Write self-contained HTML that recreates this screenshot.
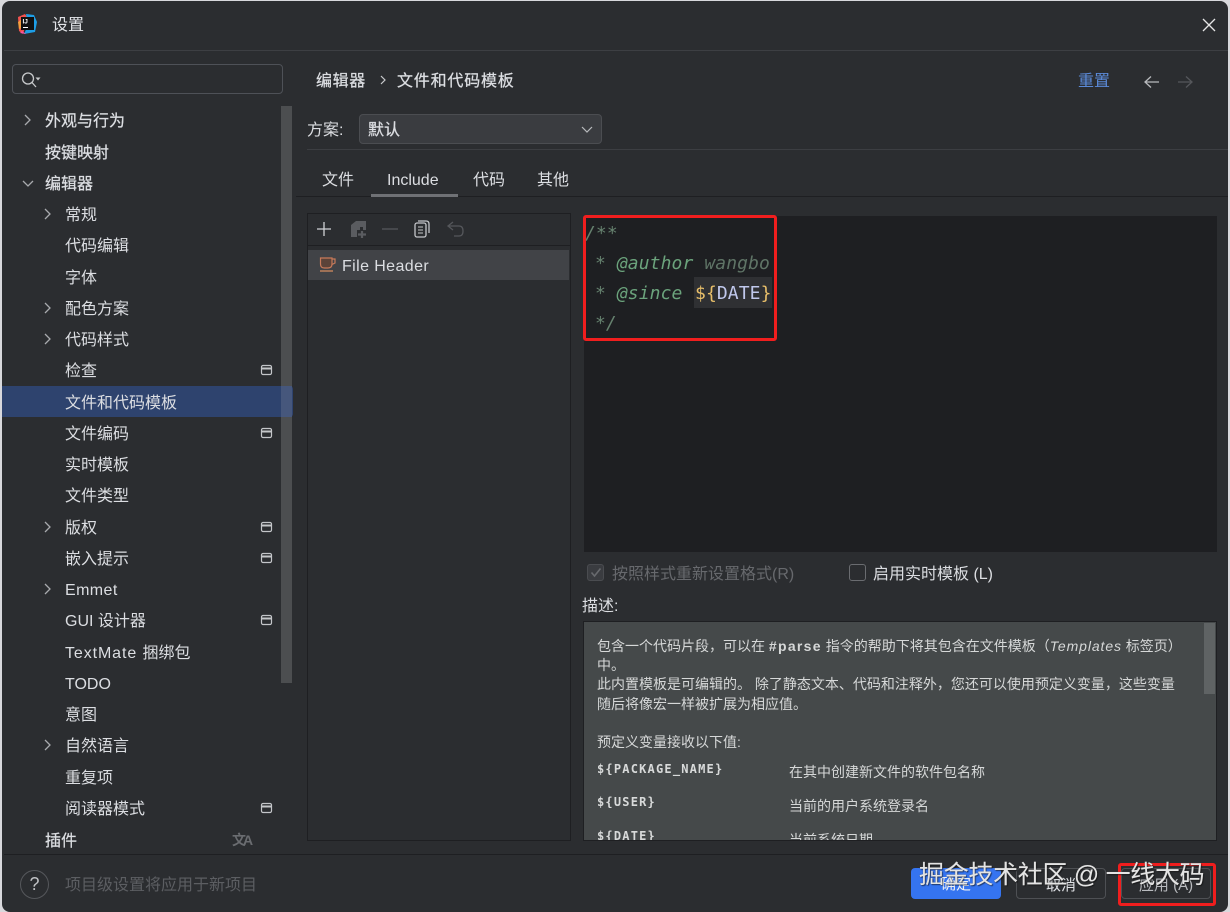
<!DOCTYPE html>
<html lang="zh"><head><meta charset="utf-8"><title>设置</title>
<style>
html,body{margin:0;padding:0;width:1230px;height:912px;overflow:hidden;background:#d8d8dc}
*{box-sizing:border-box}
body{font-family:"Liberation Sans","Noto Sans CJK SC",sans-serif;color:#dfe1e5;font-size:16px}
.a{position:absolute;white-space:nowrap;line-height:22px;margin-top:2px}
#dlg{position:absolute;left:2px;top:1px;width:1226px;height:911px;background:#2b2d30;border-radius:8px;overflow:hidden}
#root{position:absolute;left:0;top:0;width:1230px;height:912px}
.hl{position:absolute;background:#3c3e42;height:1px}
.mi{position:absolute;white-space:nowrap;font-size:16px;line-height:22px;color:#dcdee2;margin-top:2px}
.b{font-weight:400;-webkit-text-stroke:.25px #dcdee2}
.mono{font-family:"DejaVu Sans Mono","Liberation Mono",monospace}
svg{position:absolute;overflow:visible}
.a.d,.a.v{margin-top:0}
.d{font-size:14px;color:#d6d8d8;line-height:20px}
.v{font-family:"DejaVu Sans Mono","Liberation Mono",monospace;font-size:12px;letter-spacing:1.2px;font-weight:700;color:#d8dada;line-height:16px}
.btn{position:absolute;top:868px;width:90px;height:31px;border-radius:4px;text-align:center;line-height:34px;font-size:15px}
</style></head><body>
<div id="root">
<div id="dlg"></div>

<!-- title bar -->
<svg style="left:17px;top:13px" width="21" height="22" viewBox="0 0 21 22">
<path d="M1 4 L8 1 L11 5 L6 21 L2 18Z" fill="#f0524f"/><path d="M1 9 L5 6 L6 15 L2 16Z" fill="#f59d3d"/>
<path d="M9 1 L17 2 L20 9 L18 19 L7 21 L11 12Z" fill="#1d9ee6"/><path d="M5 18 L9 21 L3 20Z" fill="#ff4fa3"/>
<rect x="4" y="4" width="13" height="13" fill="#111"/>
<text x="5.5" y="10.5" font-family="Liberation Sans" font-size="6.5" font-weight="700" fill="#fff">IJ</text>
<rect x="6" y="14" width="5" height="1" fill="#fff"/></svg>
<div class="a" style="left:52px;top:13px;color:#e2e4e8">设置</div>
<svg style="left:1202px;top:18px" width="14" height="14" viewBox="0 0 14 14"><path d="M1 1 L13 13 M13 1 L1 13" stroke="#e6e6e6" stroke-width="1.3" fill="none"/></svg>
<div class="hl" style="left:4px;top:50px;width:1224px;background:#3d3f43"></div>

<!-- search -->
<div style="position:absolute;left:12px;top:64px;width:271px;height:30px;border:1px solid #4e5157;border-radius:4px"></div>
<svg style="left:20px;top:71px" width="22" height="18" viewBox="0 0 22 18"><circle cx="8" cy="7.5" r="5.5" stroke="#c8cacc" stroke-width="1.3" fill="none"/><path d="M12 11.5 L16 16" stroke="#c8cacc" stroke-width="1.3"/><path d="M15.5 6.5 H20.5 L18 9.5Z" fill="#c8cacc"/></svg>

<!-- sidebar selection and scrollbar -->
<div style="position:absolute;left:2px;top:386px;width:291px;height:31px;background:#2e436e;border-radius:0 3px 3px 0"></div>
<div style="position:absolute;left:281px;top:106px;width:11px;height:577px;background:#4c4e50"></div>
<div style="position:absolute;left:281px;top:386px;width:11px;height:31px;background:#46577c"></div>

<!-- sidebar -->
<svg style="left:0;top:0" width="300" height="860" fill="none" stroke="#a8aaae" stroke-width="1.3">
<path d="M25 115 L30 120 L25 125"/>
<path d="M23 181 L28 186 L33 181"/>
<path d="M45 209 L50 214 L45 219"/>
<path d="M45 303 L50 308 L45 313"/>
<path d="M45 334 L50 339 L45 344"/>
<path d="M45 522 L50 527 L45 532"/>
<path d="M45 584 L50 589 L45 594"/>
<path d="M45 740 L50 745 L45 750"/>
<g stroke="#c4c6c9" stroke-width="1.2">
<rect x="261.5" y="365.5" width="10" height="9" rx="1.5"/><path d="M262 368.5H271" stroke-width="2"/>
<rect x="261.5" y="428.5" width="10" height="9" rx="1.5"/><path d="M262 431.5H271" stroke-width="2"/>
<rect x="261.5" y="522.5" width="10" height="9" rx="1.5"/><path d="M262 525.5H271" stroke-width="2"/>
<rect x="261.5" y="553.5" width="10" height="9" rx="1.5"/><path d="M262 556.5H271" stroke-width="2"/>
<rect x="261.5" y="615.5" width="10" height="9" rx="1.5"/><path d="M262 618.5H271" stroke-width="2"/>
<rect x="261.5" y="803.5" width="10" height="9" rx="1.5"/><path d="M262 806.5H271" stroke-width="2"/>
</g></svg>
<div class="mi b" style="left:45px;top:109px">外观与行为</div>
<div class="mi b" style="left:45px;top:141px">按键映射</div>
<div class="mi b" style="left:45px;top:172px">编辑器</div>
<div class="mi" style="left:65px;top:203px">常规</div>
<div class="mi" style="left:65px;top:234px">代码编辑</div>
<div class="mi" style="left:65px;top:266px">字体</div>
<div class="mi" style="left:65px;top:297px">配色方案</div>
<div class="mi" style="left:65px;top:328px">代码样式</div>
<div class="mi" style="left:65px;top:359px">检查</div>
<div class="mi" style="left:65px;top:391px">文件和代码模板</div>
<div class="mi" style="left:65px;top:422px">文件编码</div>
<div class="mi" style="left:65px;top:453px">实时模板</div>
<div class="mi" style="left:65px;top:484px">文件类型</div>
<div class="mi" style="left:65px;top:516px">版权</div>
<div class="mi" style="left:65px;top:547px">嵌入提示</div>
<div class="mi" style="left:65px;top:578px;letter-spacing:.4px">Emmet</div>
<div class="mi" style="left:65px;top:609px">GUI 设计器</div>
<div class="mi" style="left:65px;top:641px"><span style="letter-spacing:.9px">TextMate </span>捆绑包</div>
<div class="mi" style="left:65px;top:672px">TODO</div>
<div class="mi" style="left:65px;top:703px">意图</div>
<div class="mi" style="left:65px;top:734px">自然语言</div>
<div class="mi" style="left:65px;top:766px">重复项</div>
<div class="mi" style="left:65px;top:797px">阅读器模式</div>
<div class="mi b" style="left:45px;top:829px">插件</div>
<div class="a" style="left:232px;top:827px;font-size:14px;color:#6a6c70;font-weight:700;letter-spacing:-3px">文A</div>

<!-- right header -->
<div class="mi b" style="left:316px;top:69px;letter-spacing:.6px">编辑器</div>
<svg style="left:380px;top:75px" width="6" height="10" viewBox="0 0 6 10"><path d="M1 1 L5 5 L1 9" stroke="#c8cacc" stroke-width="1.2" fill="none"/></svg>
<div class="mi b" style="left:397px;top:69px;letter-spacing:.8px">文件和代码模板</div>
<div class="a" style="left:1078px;top:69px;color:#5b8ad8">重置</div>
<svg style="left:1144px;top:75px" width="50" height="14" viewBox="0 0 50 14" fill="none"><path d="M1 7 H15 M7 1.5 L1 7 L7 12.5" stroke="#b8babd" stroke-width="1.3"/><path d="M34 7 H48 M42 1.5 L48 7 L42 12.5" stroke="#55575b" stroke-width="1.3"/></svg>

<!-- scheme -->
<div class="mi" style="left:307px;top:118px">方案:</div>
<div style="position:absolute;left:359px;top:114px;width:243px;height:30px;background:#3a3c40;border:1px solid #4b4d51;border-radius:4px"></div>
<div class="mi b" style="left:368px;top:118px">默认</div>
<svg style="left:581px;top:126px" width="12" height="8" viewBox="0 0 12 8"><path d="M1 1 L6 6 L11 1" stroke="#b8babd" stroke-width="1.2" fill="none"/></svg>
<div class="hl" style="left:307px;top:149px;width:921px"></div>

<!-- tabs -->
<div class="mi" style="left:322px;top:168px">文件</div>
<div class="mi" style="left:387px;top:168px">Include</div>
<div class="mi" style="left:473px;top:168px">代码</div>
<div class="mi" style="left:537px;top:168px">其他</div>
<div class="hl" style="left:296px;top:196px;width:932px;background:#1e1f22"></div>
<div style="position:absolute;left:371px;top:194px;width:87px;height:3px;background:#6f7175"></div>

<!-- list panel -->
<div style="position:absolute;left:307px;top:213px;width:264px;height:628px;border:1px solid #1e1f22"></div>
<div class="hl" style="left:308px;top:245px;width:262px;background:#1e1f22"></div>
<svg style="left:308px;top:214px" width="170" height="30" fill="none">
<path d="M9 15 H23 M16 8 V22" stroke="#d0d2d5" stroke-width="1.3"/>
<path d="M43 11 L48 7 H58 V16 H55 V13 H52 V16 H49 V23 H43Z" fill="#5a5c60"/><path d="M54 17 V24 M50 20.5 H58" stroke="#5a5c60" stroke-width="2.2"/>
<path d="M74 15 H90" stroke="#55575b" stroke-width="1.3"/>
<rect x="107" y="9" width="11" height="14" rx="2" stroke="#c4c6c9" stroke-width="1.3"/><path d="M110 7 H118 Q121 7 121 10 V19" stroke="#c4c6c9" stroke-width="1.3"/><path d="M110 13 H115 M110 16 H115 M110 19 H115" stroke="#c4c6c9"/>
<path d="M141 12 H151 Q155 12 155 17 Q155 22 151 22 H146 M145 8 L140 12 L145 16" stroke="#55575b" stroke-width="1.3"/>
</svg>
<div style="position:absolute;left:308px;top:250px;width:261px;height:30px;background:#414347"></div>
<svg style="left:319px;top:256px" width="18" height="18" viewBox="0 0 18 18" fill="none"><path d="M1.5 2 H13 V8 Q13 12 9 12 H5.5 Q1.5 12 1.5 8Z" fill="#5b4339" stroke="#c87a5a" stroke-width="1.2"/><path d="M13 3 H16 V7 L13 8.5" stroke="#c87a5a" stroke-width="1.2"/><path d="M1 15 H14" stroke="#d08a5f" stroke-width="1.3"/></svg>
<div class="mi" style="left:342px;top:254px;letter-spacing:.4px">File Header</div>

<!-- editor -->
<div style="position:absolute;left:584px;top:216px;width:633px;height:336px;background:#1e1f22"></div>
<div style="position:absolute;left:694px;top:277px;width:78px;height:31px;background:#2f3033"></div>
<div class="mono a" style="left:585px;top:220px;font-size:18px;font-style:italic;color:#66826f;line-height:24px;letter-spacing:.1px">/**</div>
<div class="mono a" style="left:595px;top:250px;font-size:18px;font-style:italic;color:#66826f;line-height:24px;letter-spacing:.1px">* <span style="color:#6ba37c">@author</span> <span style="color:#5f7466">wangbo</span></div>
<div class="mono a" style="left:595px;top:280px;font-size:18px;font-style:italic;color:#66826f;line-height:24px;letter-spacing:.1px">* <span style="color:#6ba37c">@since</span></div>
<div class="mono a" style="left:695px;top:280px;font-size:18px;color:#e8bf6a;line-height:24px;font-weight:400;letter-spacing:.1px">$<span>{</span><span style="color:#c0c8ec">DATE</span>}</div>
<div class="mono a" style="left:595px;top:310px;font-size:18px;font-style:italic;color:#66826f;line-height:24px;letter-spacing:.1px">*/</div>

<!-- red annotation -->
<div style="position:absolute;left:583px;top:215px;width:194px;height:126px;border:3px solid #f01e1e;border-radius:3px"></div>

<!-- checkboxes -->
<div style="position:absolute;left:587px;top:564px;width:17px;height:17px;border:1px solid #4a4c50;border-radius:3px;background:#3a3c40"></div>
<svg style="left:590px;top:567px" width="12" height="11" viewBox="0 0 12 11"><path d="M1.5 5.5 L4.5 9 L10.5 1.5" stroke="#686a6e" stroke-width="1.6" fill="none"/></svg>
<div class="mi" style="left:612px;top:562px;color:#67696d">按照样式重新设置格式(R)</div>
<div style="position:absolute;left:849px;top:564px;width:17px;height:17px;border:1px solid #6a6c70;border-radius:3px"></div>
<div class="mi" style="left:873px;top:562px">启用实时模板 (L)</div>
<div class="mi" style="left:582px;top:594px">描述:</div>

<!-- description -->
<div style="position:absolute;left:583px;top:621px;width:634px;height:220px;background:#45494a;border:1px solid #1e1f22;overflow:hidden">
 <div style="position:absolute;left:620px;top:1px;width:11px;height:71px;background:#5f6364"></div>
 <div class="a d" style="left:13px;top:14px">包含一个代码片段，可以在 <b style="letter-spacing:1.3px">#parse</b> 指令的帮助下将其包含在文件模板（<i style="letter-spacing:.9px">Templates</i> 标签页）</div>
 <div class="a d" style="left:13px;top:33px">中。</div>
 <div class="a d" style="left:13px;top:52px">此内置模板是可编辑的。 除了静态文本、代码和注释外，您还可以使用预定义变量，这些变量</div>
 <div class="a d" style="left:13px;top:72px">随后将像宏一样被扩展为相应值。</div>
 <div class="a d" style="left:13px;top:110px">预定义变量接收以下值:</div>
 <div class="a v" style="left:13px;top:139px">${PACKAGE_NAME}</div>
 <div class="a d" style="left:205px;top:140px">在其中创建新文件的软件包名称</div>
 <div class="a v" style="left:13px;top:172px">${USER}</div>
 <div class="a d" style="left:205px;top:174px">当前的用户系统登录名</div>
 <div class="a v" style="left:13px;top:206px">${DATE}</div>
 <div class="a d" style="left:205px;top:208px">当前系统日期</div>
</div>

<!-- footer -->
<div class="hl" style="left:4px;top:854px;width:1224px;background:#1e1f22"></div>
<div style="position:absolute;left:20px;top:870px;width:29px;height:29px;border:1px solid #55575b;border-radius:50%;text-align:center;line-height:26px;color:#c0c2c5;font-size:18px">?</div>
<div class="mi" style="left:65px;top:873px;color:#5c5e62">项目级设置将应用于新项目</div>
<div class="btn" style="left:911px;background:#3574f0;color:#f0f2f5">确定</div>
<div class="btn" style="left:1016px;border:1px solid #4e5054;color:#dfe1e5">取消</div>
<div class="btn" style="left:1121px;border:1px solid #4e5054;color:#b9bbbf">应用 (A)</div>
<div style="position:absolute;left:1118px;top:863px;width:98px;height:43px;border:3px solid #f01e1e;border-radius:3px"></div>
<div class="a" style="left:919px;top:858px;font-size:25px;line-height:30px;letter-spacing:-.3px;color:#e4e4e4;text-shadow:0 0 1px #555,1px 1px 1px rgba(0,0,0,.55)">掘金技术社区 @ 一线大码</div>
</div>
</body></html>
